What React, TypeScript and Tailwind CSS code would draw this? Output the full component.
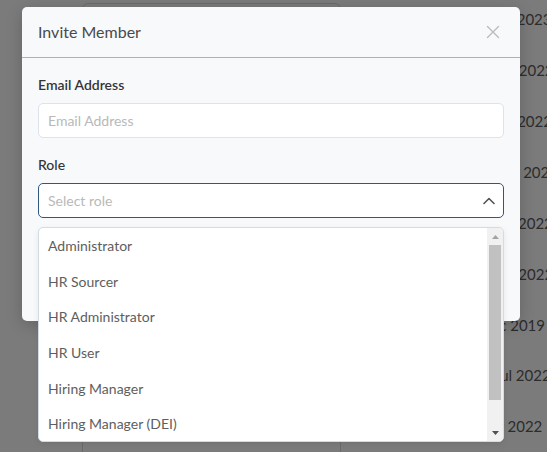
const roles = [
  "Administrator",
  "HR Sourcer",
  "HR Administrator",
  "HR User",
  "Hiring Manager",
  "Hiring Manager (DEI)",
];

// dates behind the backdrop, only their tails are visible
const dates = [
  { text: "Jan 2023", pad: "pl-[11px]" },
  { text: "Nov 2022", pad: "pl-[8px]" },
  { text: "Mar 2022", pad: "pl-[7px]" },
  { text: "Mar 2022", pad: "pl-[13px]" },
  { text: "Feb 2022", pad: "pl-[10px]" },
  { text: "Oct 2022", pad: "pl-[10px]" },
  { text: "Dec 2019", pad: "pl-[0px]" },
  { text: "Jul 2022", pad: "pl-[14px]" },
  { text: "Apr 2022", pad: "pl-[0px]" },
];

function CloseIcon() {
  return (
    <svg width="14" height="14" viewBox="0 0 14 14" fill="none" aria-hidden>
      <path d="M1.5 1.5l11 11M12.5 1.5l-11 11" stroke="#bcbcbc" strokeWidth="1.4" strokeLinecap="round" />
    </svg>
  );
}

function ChevronUp() {
  return (
    <svg width="12" height="8" viewBox="0 0 12 8" fill="none" aria-hidden>
      <path d="M1 6.5L6 1.5l5 5" stroke="#555" strokeWidth="1.6" strokeLinecap="round" strokeLinejoin="round" />
    </svg>
  );
}

function RoleDropdown() {
  return (
    <div className="absolute left-0 right-0 top-[44px] z-10 flex h-[215px] overflow-hidden rounded-[5px] border border-[#d3dce5] bg-white shadow-[0_2px_6px_rgba(0,0,0,0.08)]">
      <ul className="flex-1 pl-[9px]">
        {roles.map((role) => (
          <li key={role} className="flex h-[35.6px] items-center text-[14px] text-[#5e5e5e]">
            {role}
          </li>
        ))}
      </ul>
      <div className="flex w-[16px] flex-col bg-[#f1f1f1]">
        <div className="flex h-[17px] items-center justify-center">
          <svg width="7" height="4" viewBox="0 0 7 4" aria-hidden>
            <path d="M3.5 0L7 4H0z" fill="#a3a3a3" />
          </svg>
        </div>
        <div className="mx-[2px] h-[155px] bg-[#c1c1c1]" />
        <div className="flex-1" />
        <div className="flex h-[17px] items-center justify-center">
          <svg width="7" height="4" viewBox="0 0 7 4" aria-hidden>
            <path d="M0 0h7L3.5 4z" fill="#505050" />
          </svg>
        </div>
      </div>
    </div>
  );
}

function InviteModal() {
  return (
    <div className="absolute left-[22px] top-[7px] h-[314px] w-[498px] rounded-[5px] bg-[#f8f9fb] shadow-[0_4px_16px_rgba(0,0,0,0.18)]">
      <div className="flex h-[51px] items-center justify-between border-b border-[#a7b1c3] pl-[16px] pr-[20px]">
        <h2 className="text-[16px] text-[#4a4a4a]">Invite Member</h2>
        <CloseIcon />
      </div>
      <div className="px-[16px] pt-[17px]">
        <label className="block text-[14px] font-semibold leading-[20px] text-[#353535]">Email Address</label>
        <div className="mt-[8px] flex h-[35px] items-center rounded-[5px] border border-[#dce3ea] bg-white px-[9px] text-[14px] text-[#b9b9b9]">
          Email Address
        </div>
        <label className="mt-[17px] block text-[14px] font-medium leading-[20px] text-[#353535]">Role</label>
        <div className="relative mt-[8px]">
          <div className="flex h-[35px] items-center justify-between rounded-[5px] border border-[#2e587c] bg-white pl-[9px] pr-[8px] text-[14px] text-[#b9b9b9]">
            Select role
            <ChevronUp />
          </div>
          <RoleDropdown />
        </div>
      </div>
    </div>
  );
}

export default function App() {
  return (
    <div
      className="relative h-[452px] w-[547px] overflow-hidden bg-[#7b7b7b]"
      style={{ fontFamily: "Lato, 'Noto Sans', sans-serif" }}
    >
      <div className="flex h-full">
        <div className="ml-[82px] mt-[3px] h-[470px] w-[259px] shrink-0 rounded-[6px] border border-[#6a6a6a]" />
        <div className="ml-[139px] -mt-[6px] flex shrink-0 flex-col text-[15px] text-[#2c2c2c]">
          {dates.map((d, i) => (
            <div key={i} className={`flex h-[52.5px] items-center whitespace-nowrap ${d.pad}`}>
              {d.text}
            </div>
          ))}
        </div>
      </div>
      <InviteModal />
    </div>
  );
}
